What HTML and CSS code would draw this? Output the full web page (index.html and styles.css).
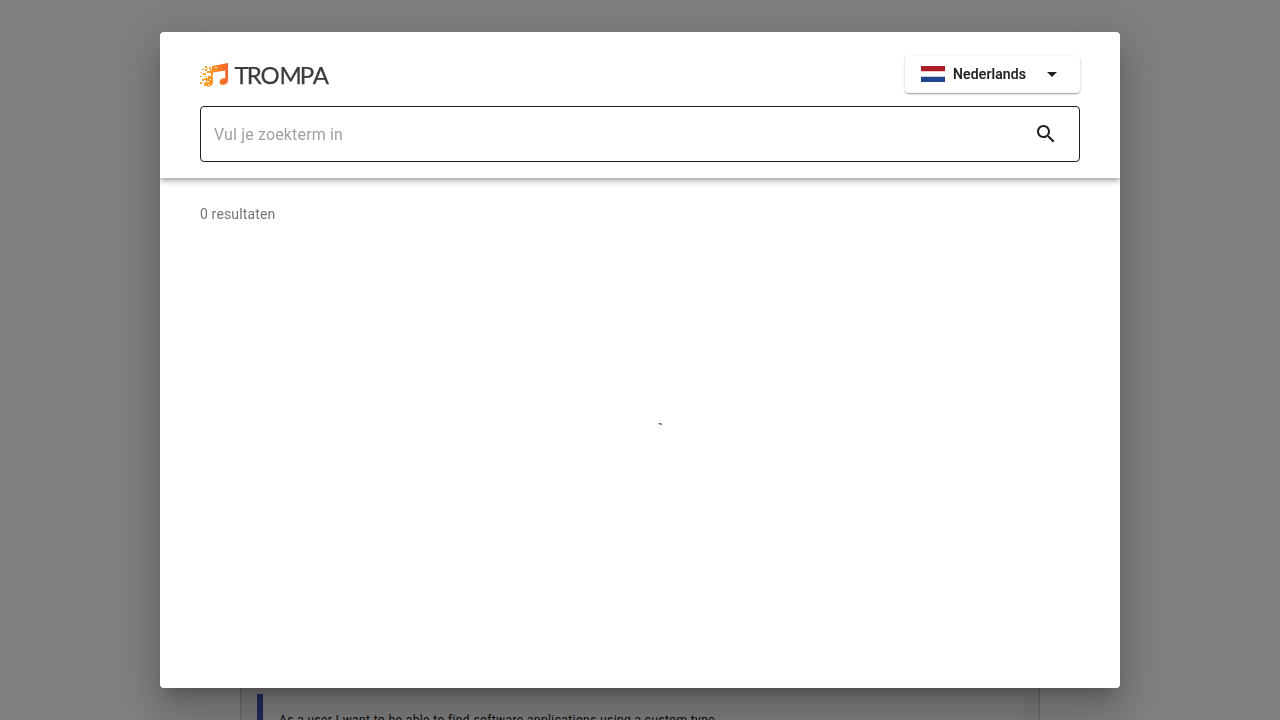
FILE: index.html
```html
<!DOCTYPE html>
<html lang="nl">
<head>
<meta charset="utf-8">
<title>Trompa</title>
<link rel="stylesheet" href="styles.css">
</head>
<body>
<main class="page">
  <div class="page-panel"><blockquote class="story">As a user I want to be able to find software applications using a custom type</blockquote></div>
</main>
<div class="backdrop">
  <section class="dialog">
    <header class="header">
      <div class="topbar">
        <svg class="logo" viewBox="0 0 130 26" role="img" aria-label="Trompa">
          <defs><linearGradient id="flame" x1="0" x2="1" y1="0" y2="0"><stop offset="0" stop-color="#fba52c"/><stop offset=".45" stop-color="#fa8c26"/><stop offset="1" stop-color="#f4622d"/></linearGradient></defs>
          <path fill="url(#flame)" d="M12 4 28 1V18.300C28 21 25.500 23 23 23C20.700 23 19.500 21.800 19.500 20.200C19.500 17.800 22 16 25.200 16.400V8.500L13 10.500V20C13 23 11 24.600 8 24.500L4 23.500V20.500H6V18H4V16H8V14H11V11H7V9H10V7H12Z"/>
          <path fill="#fba52c" d="M5 4h2v2H5zM9 5h2v2H9zM2 7h2v1H2zM5 7h2v2H5zM1 10h1v1H1zM3 11h3v2H3zM0 14h2v1H0zM2 17h2v2H2zM0 20h2v2H0zM7 6h1v1H7zM5 14h2v1H5z"/>
          <path fill="#fff" d="M11 8h1v1h-1zM9 12h1v2H9zM15 5h2v1h-2zM7 19h2v1H7zM10 17h1v1h-1zM8 22h1v1H8zM12 14h1v1h-1z"/>
          <text class="logo-text" y="21.500" x="34.600 46.700 60.400 79.600 99.800 112.800">TROMPA</text>
        </svg>
        <button class="language">
          <svg class="flag" viewBox="0 0 24 16"><path fill="#fff" d="M0 0h24v16H0z"/><path fill="#ae1c28" d="M0 0h24v5.330H0z"/><path fill="#21468b" d="M0 10.670h24V16H0z"/></svg>
          <span>Nederlands</span>
          <svg class="caret" viewBox="0 0 24 24"><path d="M7 10l5 5 5-5z"/></svg>
        </button>
      </div>
      <div class="search">
        <input class="search-input" type="text" placeholder="Vul je zoekterm in">
        <svg class="search-icon" viewBox="0 0 24 24"><path d="M15.500 14h-.79l-.28-.27C15.410 12.590 16 11.110 16 9.500 16 5.910 13.090 3 9.500 3S3 5.910 3 9.500 5.910 16 9.500 16c1.610 0 3.090-.59 4.230-1.570l.27.28v.79l5 4.990L20.490 19l-4.990-5zm-6 0C7.010 14 5 11.990 5 9.500S7.010 5 9.500 5 14 7.010 14 9.500 11.990 14 9.500 14z"/></svg>
      </div>
    </header>
    <div class="results">
      <p class="count">0 resultaten</p>
      <div class="loading"><svg class="spinner" viewBox="0 0 5 4"><path fill="#aaa" d="M0 1h1v1H0zM3 1h1v1H3z"/><path fill="#777" d="M1 1h2v1H1z"/><path fill="#999" d="M2 2h1v1H2z"/><path fill="#666" d="M3 2h1v1H3z"/><path fill="#ddd" d="M0 2h2v1H0z"/></svg></div>
    </div>
  </section>
</div>
</body>
</html>
```
FILE: styles.css
```css
* { box-sizing: border-box; }
body { margin: 0; height: 720px; overflow: hidden; font-family: Roboto, sans-serif; background: #fff; }
.page { height: 720px; display: flex; justify-content: center; padding-top: 100px; }
.page-panel { width: 800px; height: 620px; padding: 594px 16px 0; border: solid #ccc; border-width: 0 1px; background: #f0f0f0; overflow: hidden; }
.story { margin: 0; height: 60px; padding: 16px; border-left: 6px solid #3f51b5; background: #fafafa; color: #111; font-size: 12px; line-height: 20px; letter-spacing: .39px; white-space: nowrap; }
.backdrop { position: fixed; inset: 0; display: flex; align-items: center; justify-content: center; background: rgba(0,0,0,.5); }
.dialog { width: 960px; height: 656px; display: flex; flex-direction: column; overflow: hidden; border-radius: 4px; background: #fff; box-shadow: 0 11px 15px -7px rgba(0,0,0,.2), 0 24px 38px 3px rgba(0,0,0,.14), 0 9px 46px 8px rgba(0,0,0,.12); }
.header { height: 146px; flex: none; padding: 24px 40px 16px; box-shadow: 0 2px 4px -1px rgba(0,0,0,.2), 0 4px 5px rgba(0,0,0,.14), 0 1px 10px rgba(0,0,0,.12); }
.topbar { height: 37px; display: flex; justify-content: space-between; align-items: center; margin-bottom: 13px; }
.logo { width: 130px; height: 26px; overflow: visible; }
.logo-text { font: 24px Lato, sans-serif; fill: #3c3c3b; stroke: #3c3c3b; stroke-width: .25px; }
.language { width: 175px; height: 37px; display: flex; align-items: center; padding: 0 16px 1px; border: 0; border-radius: 4px; background: #fff; color: #212121; font: 500 14px Roboto, sans-serif; letter-spacing: .14px; -webkit-text-stroke: .15px #212121; box-shadow: 0 1px 3px rgba(0,0,0,.2), 0 1px 1px rgba(0,0,0,.14), 0 2px 1px -1px rgba(0,0,0,.12); }
.flag { width: 24px; height: 16px; margin-right: 8px; }
.caret { width: 24px; height: 24px; margin-left: auto; fill: #212121; }
.search { height: 56px; display: flex; align-items: center; padding: 0 21px 0 13px; border: 1px solid #212121; border-radius: 4px; }
.search-input { flex: 1; border: 0; padding: 0; outline: 0; background: none; font: 16px Roboto, sans-serif; letter-spacing: .15px; }
.search-input::placeholder { color: #a0a0a0; opacity: 1; }
.search-icon { width: 24px; height: 24px; fill: #212121; }
.results { flex: 1; display: flex; flex-direction: column; padding: 26px 40px 0; }
.count { margin: 0; color: #757575; font-size: 14px; line-height: 20px; letter-spacing: .14px; }
.loading { display: flex; justify-content: center; padding: 198px 0 0 40px; }
.spinner { width: 5px; height: 4px; }
```
